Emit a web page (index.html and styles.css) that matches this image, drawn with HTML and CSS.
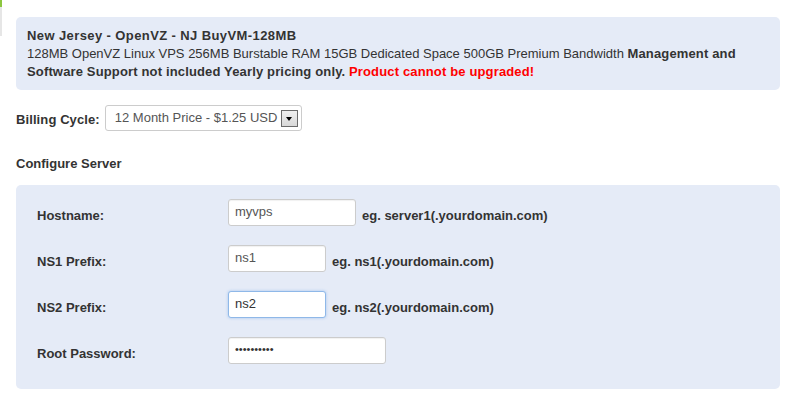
FILE: index.html
```html
<!DOCTYPE html>
<html lang="en">
<head>
    <meta charset="UTF-8">
    <meta name="viewport" content="width=device-width, initial-scale=1.0">
    <title>Configure Product</title>
    <link rel="stylesheet" href="styles.css">
</head>
<body>
    <div class="edge"></div>
    <div class="page">
        <div class="productbox">
            <strong class="title">New Jersey - OpenVZ - NJ BuyVM-128MB</strong><br>
            128MB OpenVZ Linux VPS 256MB Burstable RAM 15GB Dedicated Space 500GB Premium Bandwidth <strong>Management and Software Support not included Yearly pricing only.</strong> <strong class="red">Product cannot be upgraded!</strong>
        </div>

        <div class="billing">
            <label for="billingcycle">Billing Cycle:</label>
            <div class="selectwrap">
                <select id="billingcycle">
                    <option>12 Month Price - $1.25 USD</option>
                </select>
                <span class="arrow"></span>
            </div>
        </div>

        <h3>Configure Server</h3>

        <div class="serverbox">
            <div class="row">
                <label for="hostname">Hostname:</label>
                <input type="text" id="hostname" class="wide" value="myvps">
                <span class="hint">eg. server1(.yourdomain.com)</span>
            </div>
            <div class="row">
                <label for="ns1">NS1 Prefix:</label>
                <input type="text" id="ns1" class="short" value="ns1">
                <span class="hint">eg. ns1(.yourdomain.com)</span>
            </div>
            <div class="row">
                <label for="ns2">NS2 Prefix:</label>
                <input type="text" id="ns2" class="short focused" value="ns2">
                <span class="hint">eg. ns2(.yourdomain.com)</span>
            </div>
            <div class="row">
                <label for="rootpw">Root Password:</label>
                <input type="password" id="rootpw" class="long pw" value="abcdefghij">
            </div>
        </div>
    </div>
</body>
</html>
```

FILE: styles.css
```css
body {
    margin: 0;
    font-family: "Liberation Sans", Arial, sans-serif;
    font-size: 13px;
    line-height: 18px;
    color: #333333;
    background-color: #FFFFFF;
}
.edge {
    position: absolute;
    left: 0;
    top: 0;
    width: 2px;
    height: 36px;
    background: linear-gradient(#8cc63f 0, #8cc63f 7px, #e6e6e6 7px);
}
.page {
    padding: 17px 7px 6px 16px;
}
.productbox {
    background-color: #E5EBF7;
    border-radius: 5px;
    padding: 10px 11px 9px 11px;
}
.productbox strong {
    letter-spacing: 0.15px;
}
.productbox .title {
    letter-spacing: 0.4px;
}
.red {
    color: #FF0000;
}
.billing {
    display: flex;
    align-items: center;
    margin-top: 15px;
}
.billing label {
    font-weight: bold;
    margin-right: 5px;
    padding-top: 4px;
    letter-spacing: 0.1px;
}
.selectwrap {
    position: relative;
}
select {
    appearance: none;
    -webkit-appearance: none;
    width: 197px;
    height: 26px;
    border: 1px solid #cccccc;
    border-radius: 3px;
    background-color: #FFFFFF;
    color: #555555;
    font-family: "Liberation Sans", Arial, sans-serif;
    font-size: 13px;
    padding: 0 0 2px 9px;
    margin: 0;
    display: block;
}
.arrow {
    position: absolute;
    right: 4px;
    top: 5px;
    width: 15px;
    height: 15px;
    border: 1px solid #6b6b6b;
    background: linear-gradient(#f0f0f0, #d8d8d8);
    pointer-events: none;
}
.arrow::after {
    content: "";
    position: absolute;
    left: 4px;
    top: 6px;
    border-left: 3.5px solid transparent;
    border-right: 3.5px solid transparent;
    border-top: 4px solid #000000;
}
h3 {
    font-size: 13px;
    font-weight: bold;
    margin: 24px 0 12px 0;
    line-height: 18px;
}
.serverbox {
    background-color: #E5EBF7;
    border-radius: 5px;
    padding: 8px 21px 12px 21px;
}
.row {
    display: flex;
    align-items: center;
    height: 46px;
}
.row label {
    width: 191px;
    font-weight: bold;
}
.row input {
    height: 27px;
    box-sizing: border-box;
    margin: 0 6px 8px 0;
    padding: 0 6px 2px 6px;
    border: 1px solid #cccccc;
    border-radius: 3px;
    background-color: #FFFFFF;
    box-shadow: inset 0 1px 1px rgba(0, 0, 0, 0.06);
    color: #555555;
    font-family: "Liberation Sans", Arial, sans-serif;
    font-size: 13px;
    outline: none;
}
.row .pw {
    font-size: 11px;
    color: #333333;
}
.wide {
    width: 128px;
}
.short {
    width: 98px;
}
.long {
    width: 158px;
}
.focused {
    border-color: #8fb8e8 !important;
    box-shadow: 0 0 3px rgba(82, 148, 230, 0.45) !important;
    color: #333333 !important;
}
.hint {
    font-weight: bold;
}
```
